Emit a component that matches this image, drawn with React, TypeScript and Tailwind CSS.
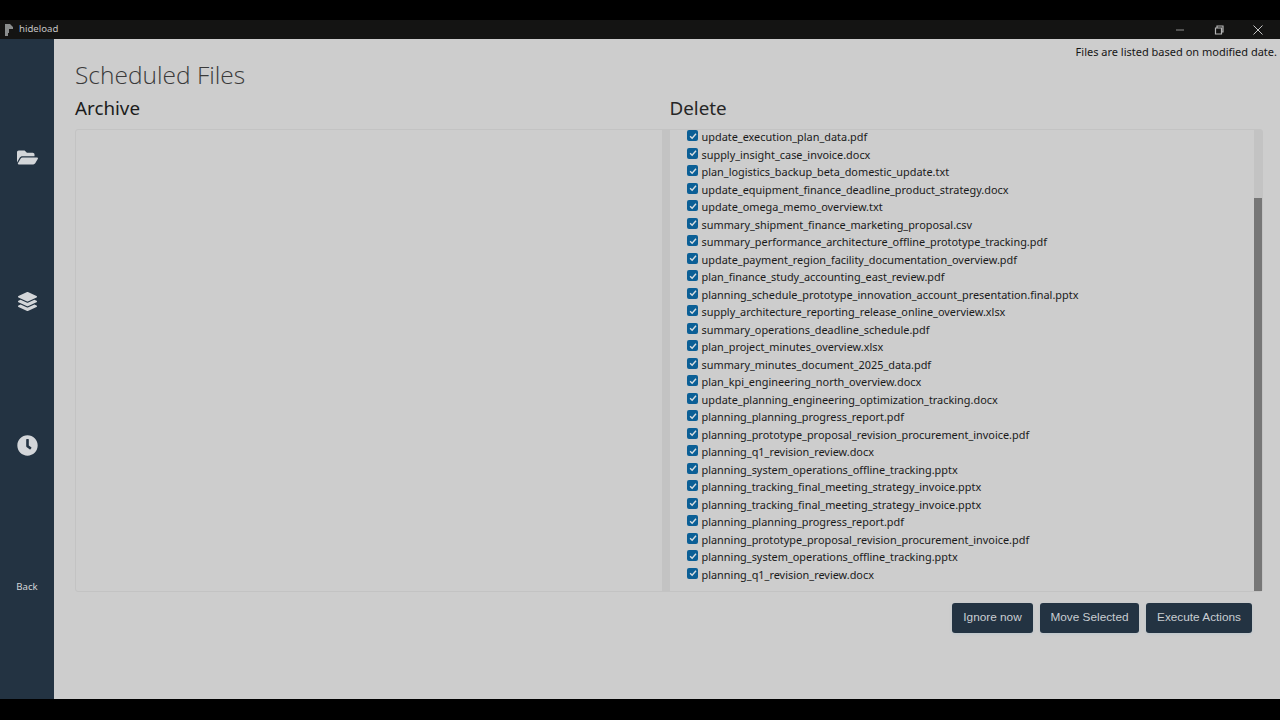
import { FaFolderOpen, FaLayerGroup, FaClock } from "react-icons/fa";

const files = [
  "update_execution_plan_data.pdf",
  "supply_insight_case_invoice.docx",
  "plan_logistics_backup_beta_domestic_update.txt",
  "update_equipment_finance_deadline_product_strategy.docx",
  "update_omega_memo_overview.txt",
  "summary_shipment_finance_marketing_proposal.csv",
  "summary_performance_architecture_offline_prototype_tracking.pdf",
  "update_payment_region_facility_documentation_overview.pdf",
  "plan_finance_study_accounting_east_review.pdf",
  "planning_schedule_prototype_innovation_account_presentation.final.pptx",
  "supply_architecture_reporting_release_online_overview.xlsx",
  "summary_operations_deadline_schedule.pdf",
  "plan_project_minutes_overview.xlsx",
  "summary_minutes_document_2025_data.pdf",
  "plan_kpi_engineering_north_overview.docx",
  "update_planning_engineering_optimization_tracking.docx",
  "planning_planning_progress_report.pdf",
  "planning_prototype_proposal_revision_procurement_invoice.pdf",
  "planning_q1_revision_review.docx",
  "planning_system_operations_offline_tracking.pptx",
  "planning_tracking_final_meeting_strategy_invoice.pptx",
  "planning_tracking_final_meeting_strategy_invoice.pptx",
  "planning_planning_progress_report.pdf",
  "planning_prototype_proposal_revision_procurement_invoice.pdf",
  "planning_system_operations_offline_tracking.pptx",
  "planning_q1_revision_review.docx",
];

function Check() {
  return (
    <span className="w-[11px] h-[11px] rounded-[2px] bg-[#0b5f96] flex items-center justify-center shrink-0 mt-[-4px]">
      <svg viewBox="0 0 12 12" className="w-[10px] h-[10px]">
        <path d="M2.5 6.2 L5 8.6 L9.6 3.4" fill="none" stroke="#d8dde0" strokeWidth="1.7" />
      </svg>
    </span>
  );
}

export default function App() {
  return (
    <div className="w-[1280px] h-[720px] bg-black flex flex-col overflow-hidden font-['Noto_Sans',sans-serif]">
      <div className="h-5 shrink-0" />
      <div className="h-[19px] shrink-0 bg-[#141413] flex items-center">
        <svg viewBox="0 0 8 12" className="w-[8px] h-[12px] ml-[5px]">
          <path d="M0 0 H5 L8 3 V5 H4 V9 H3 V12 H0 Z" fill="#8a8d8d" />
        </svg>
        <span className="ml-[6px] text-[9.6px] text-[#c4c4c4]">hideload</span>
        <div className="ml-auto flex items-center text-[#b9b9b9]">
          <svg viewBox="0 0 10 10" className="w-[10px] h-[10px]">
            <path d="M1 5 H9" stroke="#8f8f8f" strokeWidth="1" />
          </svg>
          <svg viewBox="0 0 10 10" className="w-[10px] h-[10px] ml-[29px]">
            <path d="M1.5 3 H7.5 V9 H1.5 Z M3 3 V1 H9 V7 H7.5" fill="none" stroke="#b5b5b5" strokeWidth="1.2" />
          </svg>
          <svg viewBox="0 0 10 10" className="w-[10px] h-[10px] ml-[29px] mr-[17px]">
            <path d="M.5 .5 L9.5 9.5 M9.5 .5 L.5 9.5" stroke="#c4c4c4" strokeWidth="1" />
          </svg>
        </div>
      </div>
      <div className="h-[660px] shrink-0 flex bg-[#cdcdcd]">
        <nav className="w-[54px] shrink-0 bg-[#233342] flex flex-col items-center text-[#d3d6d9] pt-[109px]">
          <FaFolderOpen className="w-[21px] h-[19px]" />
          <FaLayerGroup className="w-[19px] h-[19px] mt-[125px]" />
          <FaClock className="w-[21px] h-[21px] mt-[124px]" />
          <span className="mt-[124px] text-[9.6px] leading-[14px]">Back</span>
        </nav>
        <main className="flex-1 min-w-0 flex flex-col pl-[21px] pr-[3px]">
          <p className="text-right text-[11px] leading-[16px] pt-[5px] text-[#161616]">Files are listed based on modified date.</p>
          <h1 className="mt-px text-[24.5px] leading-[28px] font-light text-[#3a3a3a] font-['Open_Sans',sans-serif]">Scheduled Files</h1>
          <div className="flex mt-[6px] pr-[14px]">
            <h2 className="w-[594.5px] text-[18.8px] leading-[27px] text-[#1c1c1c]">Archive</h2>
            <h2 className="text-[18.8px] leading-[27px] text-[#262626]">Delete</h2>
          </div>
          <div className="flex h-[463px] mt-[7px] mr-[14px] border border-[#c3c3c3] rounded-[3px]">
            <div className="w-[586px] shrink-0" />
            <div className="w-[7.5px] shrink-0 bg-[#c3c3c3]" />
            <div className="flex-1 min-w-0 flex overflow-hidden">
              <div className="flex-1 min-w-0 pl-[17.5px] -mt-px">
                <ul className="flex flex-col">
                  {files.map((f, i) => (
                    <li key={i} className="h-[17.5px] flex items-center gap-[3.5px] text-[10.9px] leading-[17px] text-[#1a1a1a] whitespace-nowrap">
                      <Check />
                      <span className="-translate-y-px">{f}</span>
                    </li>
                  ))}
                </ul>
              </div>
              <div className="w-[8px] shrink-0 bg-[#c3c3c3] flex flex-col">
                <div className="h-[68px] shrink-0" />
                <div className="flex-1 bg-[#767676]" />
              </div>
            </div>
          </div>
          <div className="flex justify-end gap-[7px] mt-[11px] pr-[25px] font-['Liberation_Sans',sans-serif]">
            <button className="h-[30px] w-[81px] rounded-[3px] bg-[#233342] text-[#c9ced2] text-[11.8px] shadow-[0_1px_3px_#bcc6cc]">Ignore now</button>
            <button className="h-[30px] w-[99px] rounded-[3px] bg-[#233342] text-[#c9ced2] text-[11.8px] shadow-[0_1px_3px_#bcc6cc]">Move Selected</button>
            <button className="h-[30px] w-[106px] rounded-[3px] bg-[#233342] text-[#c9ced2] text-[11.8px] shadow-[0_1px_3px_#bcc6cc]">Execute Actions</button>
          </div>
        </main>
      </div>
    </div>
  );
}
